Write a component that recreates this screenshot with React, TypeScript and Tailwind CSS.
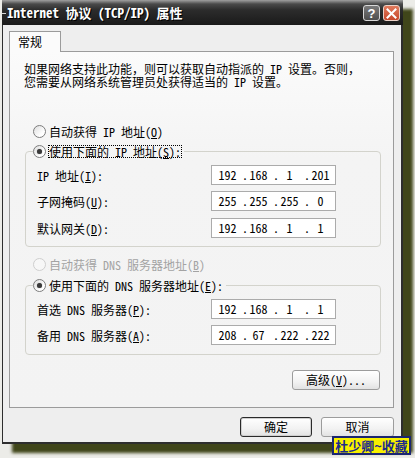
import React from "react";

const FONT = "font-['Noto_Sans_Mono_CJK_SC','Noto_Sans_CJK_SC',sans-serif]";

function Radio({ checked, disabled }: { checked?: boolean; disabled?: boolean }) {
  return (
    <span
      className={
        disabled
          ? "w-[13px] h-[13px] rounded-full border border-[#cfcfcf] bg-[#f7f7f7] flex items-center justify-center shrink-0"
          : "w-[13px] h-[13px] rounded-full border border-[#7d7d7d] bg-[linear-gradient(135deg,#dedede,#ffffff_70%)] flex items-center justify-center shrink-0"
      }
    >
      {checked && <span className="w-[5px] h-[5px] rounded-full bg-[#3a3a3a] shadow-[0_0_1px_#777]" />}
    </span>
  );
}

function IpBox({ parts }: { parts: string[] }) {
  return (
    <div className="w-[125px] h-[20px] border border-[#ababab] bg-white flex items-center pl-[3px] text-[12px] leading-none text-black">
      {parts.map((p, i) => (
        <React.Fragment key={i}>
          <span className="w-[25px] text-center">{p}</span>
          {i < 3 && <span className="w-[6px] pl-[2px]">.</span>}
        </React.Fragment>
      ))}
    </div>
  );
}

function Row({ label, parts, mt }: { label: React.ReactNode; parts: string[]; mt: string }) {
  return (
    <div className={"flex items-center pl-[11px] h-[20px] " + mt}>
      <span className="w-[174px] whitespace-nowrap">{label}</span>
      <IpBox parts={parts} />
    </div>
  );
}

function Btn({ children, def, w }: { children: React.ReactNode; def?: boolean; w: string }) {
  return (
    <div
      className={
        (def
          ? "border border-[#2a2a2a] shadow-[inset_0_0_0_1px_#cfcfcf] "
          : "border border-[#9c9c9c] ") +
        w +
        " h-[20px] rounded-[3px] bg-[linear-gradient(to_bottom,#ffffff,#f2f2f2_60%,#e2e2e2)] flex items-center justify-center text-[12px] leading-none text-black whitespace-nowrap"
      }
    >
      {children}
    </div>
  );
}

export default function App() {
  return (
    <div className={"w-[415px] h-[458px] bg-[#ecece8] overflow-hidden relative text-black " + FONT}>
      <div className="ml-[2px] w-[401px] shadow-[10px_9px_3px_#40461a]">
        {/* Title bar */}
        <div className="h-[25px] flex items-center pr-[3px] bg-[linear-gradient(to_bottom,#a0a0a0_0px,#4a4a4a_4px,#2c2c2c_10px,#1a1a1a_100%)]">
          <span className="w-[4px] h-[1px] bg-[#d8d8d8] mt-[2px]" />
          <span className="ml-[1px] text-white font-bold text-[13px] leading-none whitespace-nowrap [text-shadow:1px_1px_0_#000]">
            Internet 协议 (TCP/IP) 属性
          </span>
          <div className="ml-auto flex gap-[3px] mt-[1px]">
            <div className="w-[17px] h-[16px] rounded-[3px] border border-[#d9d9d9] bg-[linear-gradient(to_bottom,#7a7a7a,#4e4e4e)] flex items-center justify-center text-white font-bold text-[13px] leading-none font-['Liberation_Sans',sans-serif]">
              ?
            </div>
            <div className="w-[17px] h-[16px] rounded-[3px] border border-[#ecd2c8] bg-[linear-gradient(to_bottom,#e07a5c,#c8472a)] flex items-center justify-center">
              <svg width="11" height="11" viewBox="0 0 11 11">
                <path d="M1.5 1.5 L9.5 9.5 M9.5 1.5 L1.5 9.5" stroke="#ffffff" strokeWidth="2" strokeLinecap="square" />
              </svg>
            </div>
          </div>
        </div>

        {/* Body */}
        <div className="h-[419px] bg-[#eeeeee] border-l border-r-2 border-b-2 border-[#2e2e2e] pl-[6px] pr-[7px] pt-[6px] flex flex-col">
          {/* Tab */}
          <div className="relative z-10 -mb-px w-[52px] h-[21px] border border-b-0 border-[#9b9b9b] bg-[#fbfbfb] pl-[8px] pt-[3px] text-[12px] leading-[13px]">
            常规
          </div>
          {/* Panel */}
          <div className="h-[357px] border border-[#9b9b9b] bg-[linear-gradient(to_bottom,#fbfbfb,#f4f4f4_30%,#f3f3f3)] flex flex-col pt-[10px] text-[12px] leading-[13px]">
            <div className="pl-[14px] whitespace-nowrap">
              <div className="h-[13px]">如果网络支持此功能，则可以获取自动指派的 IP 设置。否则，</div>
              <div className="h-[13px]">您需要从网络系统管理员处获得适当的 IP 设置。</div>
            </div>

            <div className="mt-[37px] ml-[23px] flex items-center gap-[3px] h-[13px]">
              <Radio />
              <span className="whitespace-nowrap">
                自动获得 IP 地址(<u>O</u>)
              </span>
            </div>

            <fieldset className="mt-[7px] ml-[15px] w-[356px] border border-[#d3d3cc] rounded-[4px] pb-[8px]">
              <legend className="ml-[7px] pr-[2px]">
                <div className="flex items-center gap-[2px] h-[13px]">
                  <Radio checked />
                  <span className="border border-dotted border-black h-[13px] flex items-center whitespace-nowrap">
                    使用下面的 IP 地址(<u>S</u>):
                  </span>
                </div>
              </legend>
              <Row label={<>IP 地址(<u>I</u>):</>} parts={["192", "168", "1", "201"]} mt="mt-[7px]" />
              <Row label={<>子网掩码(<u>U</u>):</>} parts={["255", "255", "255", "0"]} mt="mt-[6px]" />
              <Row label={<>默认网关(<u>D</u>):</>} parts={["192", "168", "1", "1"]} mt="mt-[7px]" />
            </fieldset>

            <div className="mt-[11px] ml-[23px] flex items-center gap-[3px] h-[13px] text-[#a3a3a3]">
              <Radio disabled />
              <span className="whitespace-nowrap">
                自动获得 DNS 服务器地址(<u>B</u>)
              </span>
            </div>

            <fieldset className="mt-[8px] ml-[15px] w-[356px] border border-[#d3d3cc] rounded-[4px] pb-[9px]">
              <legend className="ml-[7px] pr-[2px]">
                <div className="flex items-center gap-[2px] h-[13px]">
                  <Radio checked />
                  <span className="border border-transparent h-[13px] flex items-center whitespace-nowrap">
                    使用下面的 DNS 服务器地址(<u>E</u>):
                  </span>
                </div>
              </legend>
              <Row label={<>首选 DNS 服务器(<u>P</u>):</>} parts={["192", "168", "1", "1"]} mt="mt-[7px]" />
              <Row label={<>备用 DNS 服务器(<u>A</u>):</>} parts={["208", "67", "222", "222"]} mt="mt-[6px]" />
            </fieldset>

            <div className="mt-[15px] flex justify-end pr-[13px]">
              <Btn w="w-[88px]">
                高级(<u>V</u>)...
              </Btn>
            </div>
          </div>

          {/* Bottom buttons */}
          <div className="mt-[9px] flex justify-end gap-[9px]">
            <Btn def w="w-[72px]">
              确定
            </Btn>
            <Btn w="w-[73px]">取消</Btn>
          </div>
        </div>
      </div>

      {/* Watermark stamp */}
      <div className="absolute left-[332px] top-[436px] w-[79px] h-[19px] bg-[#f7f000] border-2 border-[#1b2670] flex items-center justify-center text-[#1c2a8c] font-bold text-[13px] leading-none whitespace-nowrap font-['Noto_Sans_CJK_SC',sans-serif]">
        杜少卿~收藏
      </div>
    </div>
  );
}
